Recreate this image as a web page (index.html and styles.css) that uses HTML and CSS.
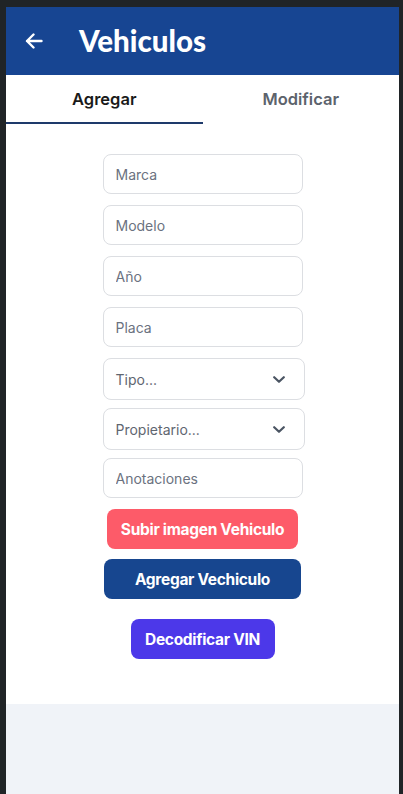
FILE: index.html
```html
<!DOCTYPE html>
<html lang="es">
<head>
<meta charset="utf-8">
<title>Vehiculos</title>
<link rel="stylesheet" href="styles.css">
</head>
<body>
<div class="app">
  <header class="topbar">
    <button class="back" aria-label="Volver">
      <svg width="18" height="16" viewBox="0 0 18 16" fill="none" stroke="#fff" stroke-width="2.4" stroke-linecap="round" stroke-linejoin="round"><path d="M16.5 8H2M8.5 1.5L2 8l6.5 6.5"/></svg>
    </button>
    <h1 class="title">Vehiculos</h1>
  </header>
  <nav class="tabs">
    <div class="tab active">Agregar</div>
    <div class="tab">Modificar</div>
  </nav>
  <main class="content">
    <form class="form">
      <input class="field" type="text" placeholder="Marca">
      <input class="field" type="text" placeholder="Modelo">
      <input class="field" type="text" placeholder="Año">
      <input class="field" type="text" placeholder="Placa">
      <div class="select">
        <span>Tipo...</span>
        <svg width="12" height="7" viewBox="0 0 12 7" fill="none" stroke="#4b5563" stroke-width="2.2" stroke-linecap="round" stroke-linejoin="round"><path d="M1.2 1.2L6 5.8l4.8-4.6"/></svg>
      </div>
      <div class="select">
        <span>Propietario...</span>
        <svg width="12" height="7" viewBox="0 0 12 7" fill="none" stroke="#4b5563" stroke-width="2.2" stroke-linecap="round" stroke-linejoin="round"><path d="M1.2 1.2L6 5.8l4.8-4.6"/></svg>
      </div>
      <input class="field notes" type="text" placeholder="Anotaciones">
    </form>
    <div class="actions">
      <button class="btn btn-upload" type="button">Subir imagen Vehiculo</button>
      <button class="btn btn-add" type="button">Agregar Vechiculo</button>
      <button class="btn btn-vin" type="button">Decodificar VIN</button>
    </div>
  </main>
</div>
</body>
</html>
```

FILE: styles.css
```css
* { box-sizing: border-box; }

html, body {
  margin: 0;
  padding: 0;
  height: 100%;
}

body {
  background: #202427;
  font-family: Inter, "Noto Sans", Arial, sans-serif;
}

.app {
  margin: 7px 4px 0 6px;
  min-height: 787px;
  background: #f0f3f8;
}

.topbar {
  height: 68px;
  background: #174592;
  display: flex;
  align-items: center;
  padding-left: 19px;
}

.back {
  background: none;
  border: 0;
  padding: 0;
  margin: 0;
  width: 18px;
  height: 16px;
  display: flex;
  cursor: pointer;
}

.title {
  margin: 0 0 2px 36px;
  color: #fff;
  font-family: Lato, "Noto Sans", sans-serif;
  font-weight: 900;
  font-size: 29.5px;
  letter-spacing: 0;
}

.tabs {
  display: flex;
  background: #fff;
  height: 49px;
}

.tab {
  flex: 1;
  display: flex;
  align-items: center;
  justify-content: center;
  font-size: 16.5px;
  font-weight: 600;
  color: #5c636c;
  padding-bottom: 2px;
}

.tab.active {
  color: #1a1a1a;
  border-bottom: 2px solid #1e3a6b;
  padding-bottom: 0;
}

.content {
  background: #fff;
  padding: 30px 0 45px;
  display: flex;
  flex-direction: column;
  align-items: center;
}

.form {
  width: 200px;
  display: flex;
  flex-direction: column;
  align-items: flex-start;
}

.field {
  width: 200px;
  height: 40px;
  border: 1px solid #dcdee2;
  border-radius: 8px;
  padding: 0 12px;
  font-family: inherit;
  font-size: 14px;
  color: #374151;
  margin-bottom: 11px;
  outline: none;
  background: #fff;
}

.field::placeholder { color: #6b7280; }

.select {
  width: 202px;
  height: 42px;
  border: 1px solid #dcdee2;
  border-radius: 8px;
  padding: 0 19px 0 12px;
  display: flex;
  align-items: center;
  justify-content: space-between;
  font-size: 14px;
  color: #5f6670;
  margin-bottom: 8px;
}

.actions {
  display: flex;
  flex-direction: column;
  align-items: center;
}

.btn {
  height: 40px;
  border: 0;
  border-radius: 8px;
  color: #fff;
  font-family: inherit;
  font-weight: 700;
  font-size: 15.5px;
  letter-spacing: -0.3px;
  cursor: pointer;
}

.btn-upload {
  width: 191px;
  background: #fd5b69;
  margin-bottom: 10px;
}

.btn-add {
  width: 197px;
  background: #17468f;
  margin-bottom: 20px;
}

.btn-vin {
  width: 144px;
  background: #4c38e9;
}
```
